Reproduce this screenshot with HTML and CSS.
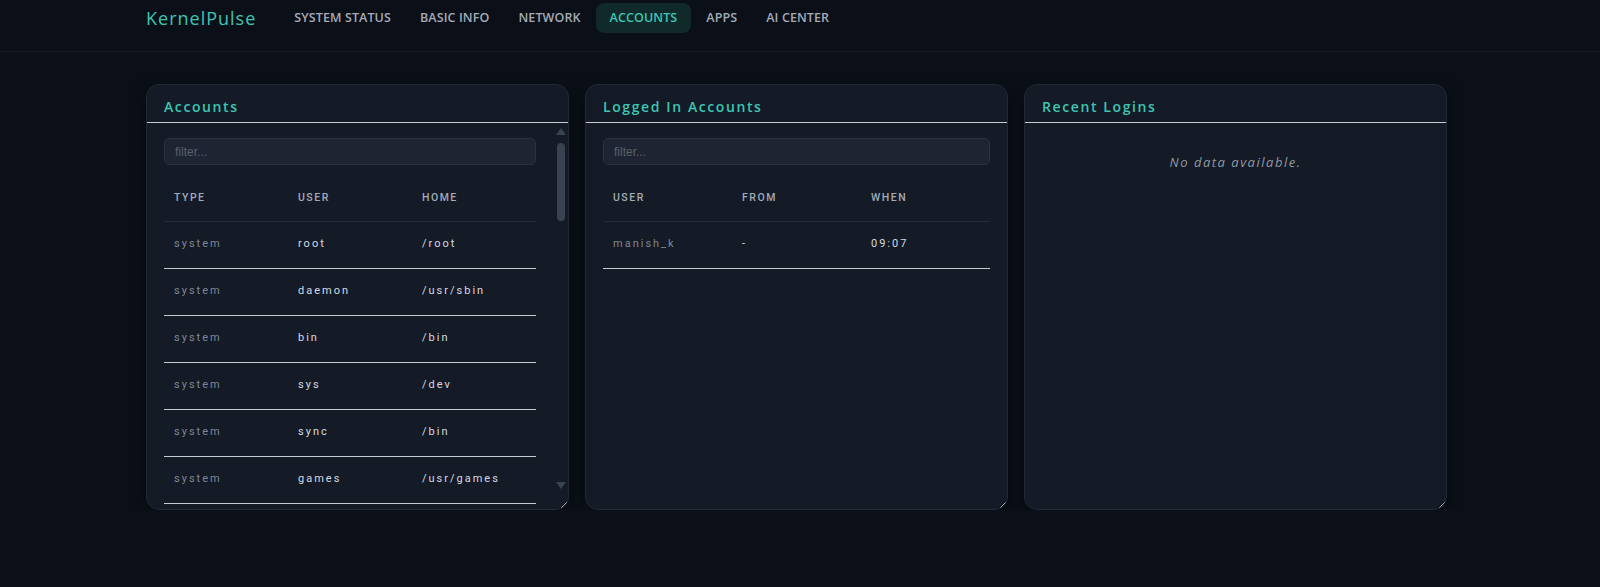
FILE: index.html
```html
<!DOCTYPE html>
<html lang="en">
<head>
  <meta charset="UTF-8" />
  <meta name="viewport" content="width=device-width, initial-scale=1" />
  <title>KernelPulse - Accounts</title>
  <link rel="stylesheet" href="styles.css">
</head>
<body>
  <header class="topbar">
    <div class="wrap topbar-inner">
      <div class="logo">KernelPulse</div>
      <nav class="nav">
        <a href="#">System Status</a>
        <a href="#">Basic Info</a>
        <a href="#">Network</a>
        <a href="#" class="active">Accounts</a>
        <a href="#">Apps</a>
        <a href="#">AI Center</a>
      </nav>
    </div>
  </header>
  <main class="wrap">
    <div class="grid">
      <section class="card">
        <h2 class="card-title">Accounts</h2>
        <div class="card-body">
          <div class="scroll-area">
            <input type="text" class="filter" placeholder="filter..." />
            <table class="tbl">
              <thead><tr><th>Type</th><th>User</th><th>Home</th></tr></thead>
              <tbody>
                <tr><td class="muted">system</td><td>root</td><td>/root</td></tr>
                <tr><td class="muted">system</td><td>daemon</td><td>/usr/sbin</td></tr>
                <tr><td class="muted">system</td><td>bin</td><td>/bin</td></tr>
                <tr><td class="muted">system</td><td>sys</td><td>/dev</td></tr>
                <tr><td class="muted">system</td><td>sync</td><td>/bin</td></tr>
                <tr><td class="muted">system</td><td>games</td><td>/usr/games</td></tr>
                <tr><td class="muted">system</td><td>man</td><td>/var/cache/man</td></tr>
                <tr><td class="muted">system</td><td>lp</td><td>/var/spool/lpd</td></tr>
                <tr><td class="muted">system</td><td>mail</td><td>/var/mail</td></tr>
                <tr><td class="muted">system</td><td>news</td><td>/var/spool/news</td></tr>
                <tr><td class="muted">user</td><td>manish_k</td><td>/home/manish_k</td></tr>
              </tbody>
            </table>
          </div>
          <div class="vscroll">
            <span class="arrow up"></span>
            <div class="track"><div class="thumb"></div></div>
            <span class="arrow down"></span>
            <span class="corner"></span>
          </div>
        </div>
      </section>
      <section class="card">
        <h2 class="card-title">Logged In Accounts</h2>
        <div class="card-body">
          <div class="scroll-area">
            <input type="text" class="filter" placeholder="filter..." />
            <table class="tbl">
              <thead><tr><th>User</th><th>From</th><th>When</th></tr></thead>
              <tbody>
                <tr><td class="muted">manish_k</td><td>-</td><td>09:07</td></tr>
              </tbody>
            </table>
          </div>
        </div>
      </section>
      <section class="card">
        <h2 class="card-title">Recent Logins</h2>
        <div class="card-body">
          <div class="scroll-area">
            <p class="empty">No data available.</p>
          </div>
        </div>
      </section>
    </div>
  </main>
</body>
</html>
```

FILE: styles.css
```css
* { box-sizing: border-box; }
html { color-scheme: dark; }
body { margin: 0; background: #0b0f17; color: #d6dae0; font-family: "Open Sans", Arial, sans-serif; }
.wrap { width: 1303px; margin: 0 0 0 146px; }

.topbar { background: #0b0f18; border-bottom: 1px solid #161b25; padding: 3px 0 18px; }
.topbar-inner { display: flex; align-items: center; }
.logo { font-size: 18px; color: #3cc6b2; letter-spacing: 1px; margin-right: 24px; line-height: 30px; }
.nav { display: flex; gap: 1px; }
.nav a { display: block; padding: 7px 14px; line-height: 16px; font-size: 12.5px; font-weight: 600; color: #a3abb7; text-decoration: none; text-transform: uppercase; letter-spacing: 0.1px; border-radius: 8px; }
.nav a.active { background: #10292b; color: #3cc6b2; }

main { padding-top: 32px; }
.grid { display: grid; grid-template-columns: repeat(3, 423px); gap: 16px; }
.card { background: #141a26; border: 1px solid #212836; border-radius: 13px; height: 426px; display: flex; flex-direction: column; overflow: hidden; box-shadow: 0 4px 14px rgba(0,0,0,0.35); }
.card-title { margin: 0; padding: 13px 17px 6px; font-size: 14px; line-height: 18px; font-weight: 600; color: #3cc6b2; letter-spacing: 1.6px; border-bottom: 1px solid #c7ccd3; }
.card-body { flex: 1; min-height: 0; display: flex; overflow: hidden; resize: vertical; }
.scroll-area { flex: 1; min-width: 0; overflow: hidden; padding: 15px 17px; }

/* fake scrollbar (headless hides the native one) */
.vscroll { width: 15px; flex: none; display: flex; flex-direction: column; align-items: center; }
.arrow { width: 0; height: 0; border-left: 5px solid transparent; border-right: 5px solid transparent; margin: 5px 0 4px; }
.arrow.up { border-bottom: 7px solid #3a4150; }
.arrow.down { border-top: 7px solid #3a4150; margin: 4px 0 5px; }
.track { flex: 1; width: 100%; display: flex; justify-content: center; padding-top: 4px; }
.thumb { width: 8px; height: 78px; background: #3a4150; border-radius: 4px; }
.corner { height: 15px; }

.filter { display: block; width: 100%; height: 27px; padding: 0 10px; background: #1e2431; border: 1px solid #2a3140; border-radius: 5px; color: #d6dae0; font-family: Arial, sans-serif; font-size: 12px; outline: none; }
.filter::placeholder { color: #59616e; }

.tbl { width: 100%; border-collapse: collapse; margin-top: 12px; table-layout: fixed; font-family: Roboto, Arial, sans-serif; }
.tbl th { text-align: left; font-size: 10.5px; font-weight: 500; color: #a3abb7; letter-spacing: 1.5px; text-transform: uppercase; padding: 14px 10px 17px; border-bottom: 1px solid #252c39; }
.tbl td { font-size: 11px; color: #d6dae0; letter-spacing: 2px; padding: 14px 10px 17px; line-height: 15px; border-bottom: 1px solid #c7ccd3; }
.tbl td.muted { color: #7f8793; }

.empty { margin: 15px 0 0; text-align: center; font-style: italic; font-size: 13px; color: #9099a6; letter-spacing: 1.5px; }
```
